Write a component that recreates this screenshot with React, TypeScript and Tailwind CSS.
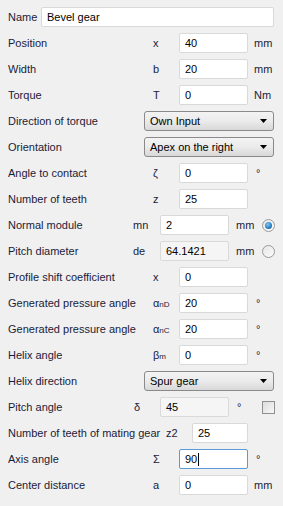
import { ReactNode } from "react";

const font = "font-['Liberation_Sans',Arial,sans-serif]";

function Input({ value, className = "", disabled, focused }: { value: string; className?: string; disabled?: boolean; focused?: boolean }) {
  return (
    <div
      className={`h-[20px] flex items-center pl-[5px] border rounded-[2px] text-[11px] text-black ${
        disabled ? "bg-[#f5f5f5] border-[#dadada]" : focused ? "bg-white border-[#5b9bd5]" : "bg-white border-[#d9d9d9]"
      } ${className}`}
    >
      {value}
      {focused && <span className="w-px h-[13px] bg-black ml-px" />}
    </div>
  );
}

function Select({ value }: { value: string }) {
  return (
    <div className="ml-[14px] w-[130px] h-[20px] flex items-center justify-between pl-[5px] pr-[6px] border border-[#8a8a8a] rounded-[3px] bg-gradient-to-b from-[#f3f3f3] via-[#ebebeb] to-[#d8d8d8] text-[11px] text-black">
      <span>{value}</span>
      <svg width="7" height="4" viewBox="0 0 7 4">
        <path d="M0 0H7L3.5 4Z" fill="#000" />
      </svg>
    </div>
  );
}

function Radio({ checked }: { checked?: boolean }) {
  return (
    <div className="w-[13px] h-[13px] rounded-full border border-[#9a9a9a] bg-gradient-to-br from-[#e6e6e6] to-[#fbfbfb] flex items-center justify-center">
      {checked && <div className="w-[7px] h-[7px] rounded-full bg-[radial-gradient(circle_at_40%_35%,#7cc8f5,#1f6fb2_70%,#123f73)]" />}
    </div>
  );
}

function Row({ label, children }: { label: string; children?: ReactNode }) {
  return (
    <div className="h-[26px] flex items-center">
      <div className="w-[130px] shrink-0 pl-[8px] whitespace-nowrap text-[11px] text-[#1b1b38]">{label}</div>
      <div className="w-[153px] shrink-0 flex items-center text-[11px] text-[#1b1b38]">{children}</div>
    </div>
  );
}

function Std({ sym, value, unit, focused }: { sym: ReactNode; value: string; unit?: string; focused?: boolean }) {
  return (
    <>
      <span className="ml-[23px] w-[26px]">{sym}</span>
      <Input value={value} className="w-[69px]" focused={focused} />
      {unit && <span className={unit === "°" ? "ml-[8px]" : "ml-[6px]"}>{unit}</span>}
    </>
  );
}

export default function App() {
  return (
    <div className={`w-[283px] h-[506px] bg-[#f0f0f0] pt-[4px] ${font}`}>
      <div className="h-[26px] flex items-center pl-[8px] text-[11px] text-[#1b1b38]">
        <span className="w-[33px]">Name</span>
        <Input value="Bevel gear" className="w-[233px]" />
      </div>
      <Row label="Position"><Std sym="x" value="40" unit="mm" /></Row>
      <Row label="Width"><Std sym="b" value="20" unit="mm" /></Row>
      <Row label="Torque"><Std sym="T" value="0" unit="Nm" /></Row>
      <Row label="Direction of torque"><Select value="Own Input" /></Row>
      <Row label="Orientation"><Select value="Apex on the right" /></Row>
      <Row label="Angle to contact"><Std sym="ζ" value="0" unit="°" /></Row>
      <Row label="Number of teeth"><Std sym="z" value="25" /></Row>
      <Row label="Normal module">
        <span className="ml-[3px] w-[27px]">mn</span>
        <Input value="2" className="w-[69px]" />
        <span className="ml-[7px] w-[26px]">mm</span>
        <Radio checked />
      </Row>
      <Row label="Pitch diameter">
        <span className="ml-[3px] w-[27px]">de</span>
        <Input value="64.1421" className="w-[69px]" disabled />
        <span className="ml-[7px] w-[26px]">mm</span>
        <Radio />
      </Row>
      <Row label="Profile shift coefficient"><Std sym="x" value="0" /></Row>
      <Row label="Generated pressure angle">
        <Std sym={<>α<span className="text-[8px]">nD</span></>} value="20" unit="°" />
      </Row>
      <Row label="Generated pressure angle">
        <Std sym={<>α<span className="text-[8px]">nC</span></>} value="20" unit="°" />
      </Row>
      <Row label="Helix angle">
        <Std sym={<>β<span className="text-[8px]">m</span></>} value="0" unit="°" />
      </Row>
      <Row label="Helix direction"><Select value="Spur gear" /></Row>
      <Row label="Pitch angle">
        <span className="ml-[4px] w-[26px]">δ</span>
        <Input value="45" className="w-[69px]" disabled />
        <span className="ml-[8px] w-[25px]">°</span>
        <div className="w-[13px] h-[13px] border border-[#8f8f8f] bg-gradient-to-br from-[#dcdcdc] to-[#f8f8f8]" />
      </Row>
      <Row label="Number of teeth of mating gear">
        <span className="ml-[36px] w-[26px]">z2</span>
        <Input value="25" className="w-[56px]" />
      </Row>
      <Row label="Axis angle"><Std sym="Σ" value="90" unit="°" focused /></Row>
      <Row label="Center distance"><Std sym="a" value="0" unit="mm" /></Row>
    </div>
  );
}
